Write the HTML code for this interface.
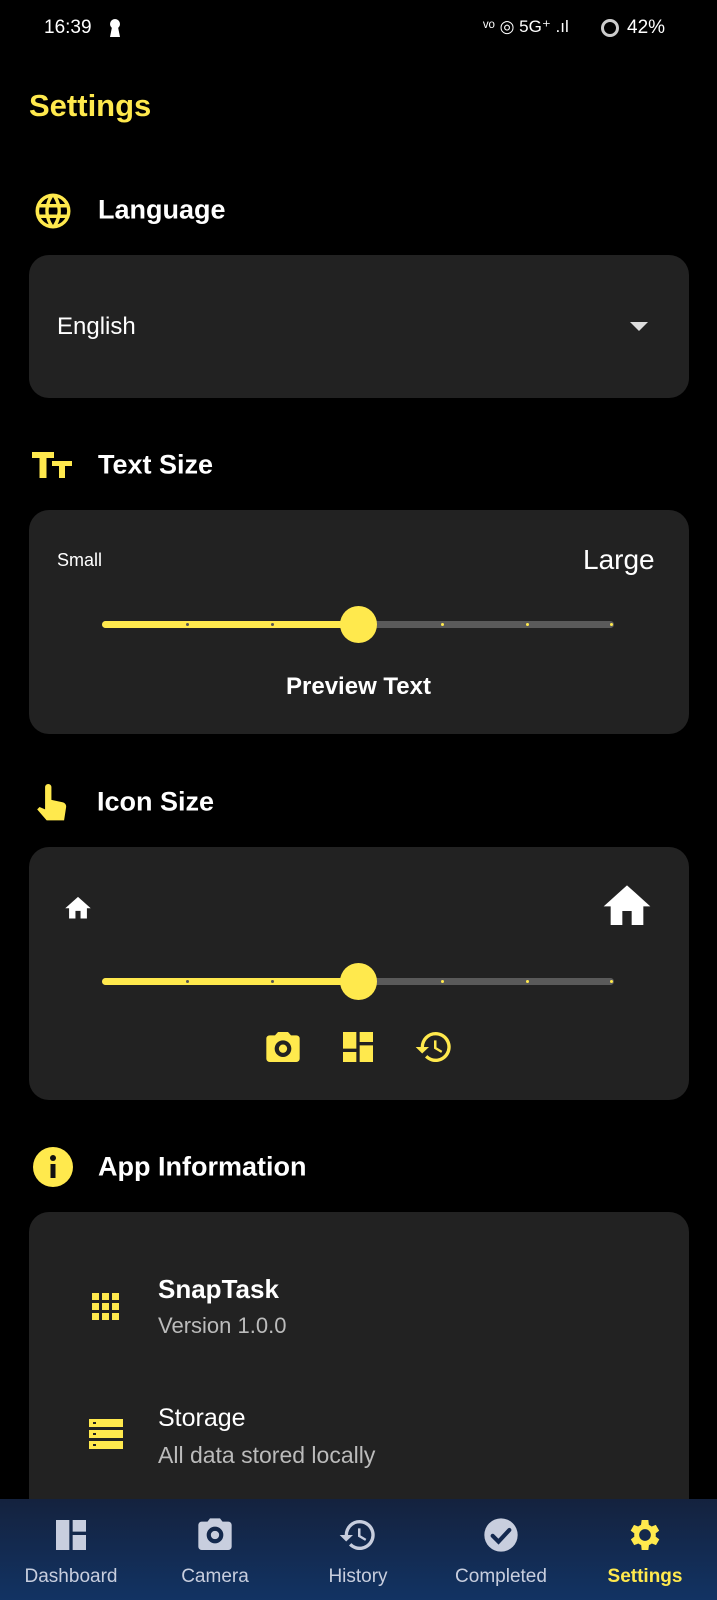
<!DOCTYPE html>
<html><head><meta charset="utf-8"><style>
*{margin:0;padding:0;box-sizing:border-box}
body{width:717px;height:1600px;background:#000;font-family:"Liberation Sans",sans-serif;color:#fff;position:relative;overflow:hidden}
.a{position:absolute;white-space:nowrap}
.card{position:absolute;left:29px;width:660px;background:#222;border-radius:20px}
.h{font-size:27px;font-weight:bold;transform:translateY(-50%)}
.y{color:#FFE94D}
.track{position:absolute;left:102px;width:512px;height:7px;border-radius:4px;background:#5a5a5a}
.fill{position:absolute;left:0;top:0;height:7px;width:256px;background:#FFE94D;border-radius:4px}
.dot{position:absolute;top:2px;width:3px;height:3px;border-radius:50%}
.thumb{position:absolute;left:238px;top:-15px;width:37px;height:37px;border-radius:50%;background:#FFE94D}
.nav{position:absolute;left:0;top:1499px;width:717px;height:101px;background:linear-gradient(#14223e,#123363)}
.ni{position:absolute;top:16px;width:140px;text-align:center;transform:translateX(-50%)}
.nl{font-size:19px;color:#c8cede;margin-top:6px}
</style></head><body>
<div class="a" style="left:44px;top:17px;font-size:19px">16:39</div>
<svg class="a" style="left:109px;top:18px" width="12" height="20"><circle cx="6" cy="6" r="5" fill="#fff"/><path d="M3 9h6l2 10H1z" fill="#fff"/></svg>
<div class="a" style="left:483px;top:17px;font-size:17px">ᵛᵒ ◎ 5G⁺ .ıl</div>
<svg class="a" style="left:600px;top:18px" width="20" height="20"><circle cx="10" cy="10" r="7.5" fill="none" stroke="#ccc" stroke-width="3"/></svg>
<div class="a" style="left:627px;top:17px;font-size:19px">42%</div>

<div class="a y" style="left:29px;top:88px;font-size:31px;font-weight:bold">Settings</div>

<svg class="a" style="left:32px;top:190px" width="42" height="42" viewBox="0 0 24 24"><path fill="#FFE94D" d="M12 2a10 10 0 100 20 10 10 0 000-20zm6.9 6h-2.9a15.6 15.6 0 00-1.4-3.6A8 8 0 0118.9 8zM12 4c.8 1.2 1.5 2.5 1.9 4h-3.8c.4-1.4 1.1-2.8 1.9-4zM4.3 14a8 8 0 010-4h3.4c-.1.7-.1 1.3-.1 2s.1 1.3.1 2zm.8 2h3a15.6 15.6 0 001.4 3.6A8 8 0 015.1 16zm3-8h-3a8 8 0 014.3-3.6C8.8 5.5 8.4 6.7 8.1 8zM12 20c-.8-1.2-1.5-2.5-1.900-4h3.8c-.4 1.4-1.1 2.8-1.9 4zm2.3-6H9.7c-.1-.7-.2-1.3-.2-2s.1-1.3.2-2h4.7c.1.7.2 1.3.2 2s-.1 1.3-.3 2zm.3 5.6c.6-1.1 1.1-2.3 1.4-3.6h3a8 8 0 01-4.4 3.6zm1.8-5.6c.1-.7.1-1.3.1-2s-.1-1.3-.1-2h3.4a8 8 0 010 4z"/></svg>
<div class="a h" style="left:98px;top:210px">Language</div>
<div class="card" style="top:255px;height:143px"></div>
<div class="a" style="left:57px;top:313px;font-size:24px">English</div>
<svg class="a" style="left:630px;top:322px" width="18" height="10"><path d="M0 0h18L9 9z" fill="#ddd"/></svg>

<svg class="a" style="left:32px;top:450px" width="40" height="30" viewBox="0 0 40 30"><path fill="#FFE94D" d="M0 2h22v6h-7.5v20h-7V8H0zM20 11h20v5h-7v12h-6V16h-7z"/></svg>
<div class="a h" style="left:98px;top:465px">Text Size</div>
<div class="card" style="top:510px;height:224px"></div>
<div class="a" style="left:57px;top:550px;font-size:18px">Small</div>
<div class="a" style="left:583px;top:544px;font-size:28px">Large</div>
<div class="track" style="top:621px"><div class="fill"></div><div class="thumb"></div>
<div class="dot" style="left:84px;background:#555"></div><div class="dot" style="left:169px;background:#555"></div><div class="dot" style="left:339px;background:#FFE94D"></div><div class="dot" style="left:424px;background:#FFE94D"></div><div class="dot" style="left:508px;background:#FFE94D"></div></div>
<div class="a" style="left:0;width:717px;text-align:center;top:673px;font-size:24px;font-weight:bold">Preview Text</div>

<svg class="a" style="left:34px;top:782px" width="38" height="42" viewBox="0 0 24 26"><path fill="#FFE94D" d="M7 3a2 2 0 014 0v8l7 1.5c1.5.4 2.5 1.5 2.3 3L19 24H8l-6-7 1.5-1.5L7 17z"/></svg>
<div class="a h" style="left:97px;top:802px">Icon Size</div>
<div class="card" style="top:847px;height:253px"></div>
<svg class="a" style="left:62px;top:893px" width="32" height="28" viewBox="0 0 24 22"><path fill="#fff" d="M10 20v-6h4v6h5v-8h3L12 3 2 12h3v8z"/></svg>
<svg class="a" style="left:599px;top:878px" width="56" height="52" viewBox="0 0 24 22"><path fill="#fff" d="M10 20v-6h4v6h5v-8h3L12 3 2 12h3v8z"/></svg>
<div class="track" style="top:978px"><div class="fill"></div><div class="thumb"></div>
<div class="dot" style="left:84px;background:#555"></div><div class="dot" style="left:169px;background:#555"></div><div class="dot" style="left:339px;background:#FFE94D"></div><div class="dot" style="left:424px;background:#FFE94D"></div><div class="dot" style="left:508px;background:#FFE94D"></div></div>
<svg class="a" style="left:262px;top:1027px" width="42" height="40" viewBox="0 0 24 24"><path fill="#FFE94D" d="M9 3L7.2 5H4a2 2 0 00-2 2v12a2 2 0 002 2h16a2 2 0 002-2V7a2 2 0 00-2-2h-3.2L15 3zm3 15a5 5 0 110-10 5 5 0 010 10zm0-2.5a2.5 2.5 0 100-5 2.5 2.5 0 000 5z"/></svg>
<svg class="a" style="left:338px;top:1027px" width="40" height="40" viewBox="0 0 24 24"><path fill="#FFE94D" d="M3 13h8V3H3zm0 8h8v-6H3zm10 0h8V11h-8zm0-18v6h8V3z"/></svg>
<svg class="a" style="left:413px;top:1027px" width="42" height="40" viewBox="0 0 24 24"><path fill="#FFE94D" d="M13 3a9 9 0 00-9 9H1l3.9 3.9L9 12H6a7 7 0 112 4.9l-1.4 1.4A9 9 0 1013 3zm-1 5v5l4.3 2.5.7-1.2-3.5-2.1V8z"/></svg>

<svg class="a" style="left:33px;top:1147px" width="40" height="40"><circle cx="20" cy="20" r="20" fill="#FFE94D"/><rect x="17.5" y="17" width="5" height="14" fill="#111"/><circle cx="20" cy="11" r="3" fill="#111"/></svg>
<div class="a h" style="left:98px;top:1167px">App Information</div>
<div class="card" style="top:1212px;height:340px"></div>
<svg class="a" style="left:92px;top:1293px" width="28" height="28"><g fill="#FFE94D"><rect x="0" y="0" width="7" height="7"/><rect x="10" y="0" width="7" height="7"/><rect x="20" y="0" width="7" height="7"/><rect x="0" y="10" width="7" height="7"/><rect x="10" y="10" width="7" height="7"/><rect x="20" y="10" width="7" height="7"/><rect x="0" y="20" width="7" height="7"/><rect x="10" y="20" width="7" height="7"/><rect x="20" y="20" width="7" height="7"/></g></svg>
<div class="a" style="left:158px;top:1274px;font-size:26px;font-weight:bold">SnapTask</div>
<div class="a" style="left:158px;top:1313px;font-size:22px;color:#bbb">Version 1.0.0</div>
<svg class="a" style="left:89px;top:1419px" width="34" height="30"><g fill="#FFE94D"><rect y="0" width="34" height="8"/><rect y="11" width="34" height="8"/><rect y="22" width="34" height="8"/></g><g fill="#222"><rect x="4" y="3" width="3" height="2"/><rect x="4" y="14" width="3" height="2"/><rect x="4" y="25" width="3" height="2"/></g></svg>
<div class="a" style="left:158px;top:1404px;font-size:25px">Storage</div>
<div class="a" style="left:158px;top:1442px;font-size:23px;color:#bbb">All data stored locally</div>

<div class="nav">
<div class="ni" style="left:71px"><svg width="40" height="40" viewBox="0 0 24 24"><path fill="#c8cede" d="M3 3h8v18H3zm10 0h8v7h-8zm0 9h8v9h-8z"/></svg><div class="nl">Dashboard</div></div>
<div class="ni" style="left:215px"><svg width="42" height="40" viewBox="0 0 24 24"><path fill="#c8cede" d="M9 2L7.5 4H4a2 2 0 00-2 2v13a2 2 0 002 2h16a2 2 0 002-2V6a2 2 0 00-2-2h-3.5L15 2zm3 15a5 5 0 110-10 5 5 0 010 10zm0-2.5a2.5 2.5 0 100-5 2.5 2.5 0 000 5z"/></svg><div class="nl">Camera</div></div>
<div class="ni" style="left:358px"><svg width="42" height="40" viewBox="0 0 24 24"><path fill="#c8cede" d="M13 3a9 9 0 00-9 9H1l3.9 3.9L9 12H6a7 7 0 112 4.9l-1.4 1.4A9 9 0 1013 3zm-1 5v5l4.3 2.5.7-1.2-3.5-2.1V8z"/></svg><div class="nl">History</div></div>
<div class="ni" style="left:501px"><svg width="42" height="40" viewBox="0 0 24 24"><circle cx="12" cy="12" r="10" fill="#c8cede"/><path d="M7 12.5l3.5 3.5L17 9" stroke="#14294f" stroke-width="2.5" fill="none" stroke-linecap="round"/></svg><div class="nl">Completed</div></div>
<div class="ni" style="left:645px"><svg width="42" height="40" viewBox="0 0 24 24"><path fill="#FFE94D" d="M19.4 13a7.5 7.5 0 000-2l2.1-1.6-2-3.5-2.5 1a7.6 7.6 0 00-1.7-1L15 3h-4l-.4 2.9a7.6 7.6 0 00-1.7 1l-2.5-1-2 3.5L6.6 11a7.5 7.5 0 000 2l-2.1 1.6 2 3.5 2.5-1a7.6 7.6 0 001.7 1L11 21h4l.4-2.9a7.6 7.6 0 001.7-1l2.5 1 2-3.5zM13 15.5a3.5 3.5 0 110-7 3.5 3.5 0 010 7z" transform="translate(-1 0)"/></svg><div class="nl" style="color:#FFE94D;font-weight:bold">Settings</div></div>
</div>
</body></html>
